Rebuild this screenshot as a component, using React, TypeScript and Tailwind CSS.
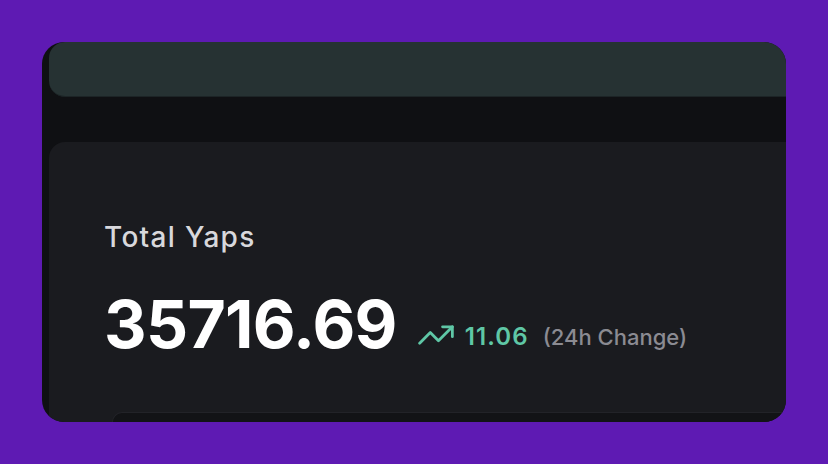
import React from "react";

function TrendUp() {
  return (
    <svg width="36" height="20" viewBox="1 6 22 12" fill="none" stroke="#5fc7a6" strokeWidth="1.7" strokeLinecap="round" strokeLinejoin="round" className="shrink-0 mb-[2px]">
      <polyline points="22 7 13.5 15.5 8.5 10.5 2 17" />
      <polyline points="16 7 22 7 22 13" />
    </svg>
  );
}

export default function App() {
  return (
    <div className="w-[828px] h-[464px] bg-[#5e1ab3] p-[42px]" style={{ fontFamily: "Inter, 'Noto Sans', sans-serif" }}>
      <div className="w-[744px] h-[380px] rounded-[22px] overflow-hidden bg-[#0f1013] flex flex-col pl-[7px]">
        <div className="h-[55px] shrink-0 bg-[#263233] rounded-l-[16px] border-b border-[#1c2426]" />
        <div className="h-[45px] shrink-0" />
        <div className="flex-1 bg-[#1a1b1f] rounded-tl-[16px] flex flex-col pl-[55px] pt-[79px]">
          <div className="text-[28px] leading-[32px] font-medium text-[#d8d8dc] tracking-[1.3px]">Total Yaps</div>
          <div className="flex items-baseline mt-[38px]">
            <div className="text-[66px] leading-[66px] font-bold text-white tracking-[-0.7px]">35716.69</div>
            <div className="flex items-baseline ml-[21px] relative top-[-3px]">
              <TrendUp />
              <span className="ml-[11px] text-[24px] font-semibold text-[#5fc7a6] tracking-[1.1px]">11.06</span>
              <span className="ml-[14px] text-[22px] font-medium text-[#8b8b92]">(24h Change)</span>
            </div>
          </div>
          <div className="mt-auto ml-[8px] h-[10px] bg-[#121316] rounded-tl-[12px] border-t border-l border-[#222328]" />
        </div>
      </div>
    </div>
  );
}
